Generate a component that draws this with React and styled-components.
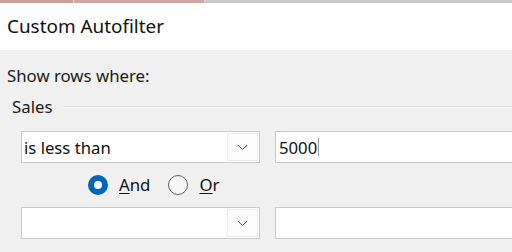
import styled, { createGlobalStyle } from "styled-components";

const Global = createGlobalStyle`
  html, body {
    margin: 0;
    padding: 0;
    width: 512px;
    height: 252px;
    overflow: hidden;
    background: #f0f0f0;
  }
  body {
    font-family: "Noto Sans", "Open Sans", sans-serif;
    color: #1a1a1a;
  }
`;

export default function App() {
  return (
    <>
      <Global />
      <Window>
        <TopStrip>
          <Strip color="#cf9c9c" width="73px" />
          <Strip color="#d4a3a3" width="130px" />
          <Strip color="#c9c9c9" grow />
        </TopStrip>
        <TitleBar>Custom Autofilter</TitleBar>
        <Content>
          <Caption>Show rows where:</Caption>
          <GroupHeader>
            <span>Sales</span>
            <Rule />
          </GroupHeader>
          <FieldRow $top="14px">
            <Select>
              <SelectText>is less than</SelectText>
              <ArrowButton>
                <Chevron />
              </ArrowButton>
            </Select>
            <TextBox>
              5000<Caret />
            </TextBox>
          </FieldRow>
          <RadioRow>
            <RadioOption>
              <Radio checked />
              <RadioLabel>
                <u>A</u>nd
              </RadioLabel>
            </RadioOption>
            <RadioOption>
              <Radio />
              <RadioLabel>
                <u>O</u>r
              </RadioLabel>
            </RadioOption>
          </RadioRow>
          <FieldRow>
            <Select>
              <SelectText />
              <ArrowButton>
                <Chevron />
              </ArrowButton>
            </Select>
            <TextBox />
          </FieldRow>
        </Content>
      </Window>
    </>
  );
}

function Chevron() {
  return (
    <svg width="11" height="7" viewBox="0 0 11 7">
      <path d="M1 1.2 L5.5 5.5 L10 1.2" fill="none" stroke="#555" strokeWidth="1" />
    </svg>
  );
}

const Window = styled.div`
  width: 512px;
  height: 252px;
  display: flex;
  flex-direction: column;
  overflow: hidden;
`;

const TopStrip = styled.div`
  display: flex;
  height: 3px;
  gap: 1px;
  background: #e6d0d0;
`;

const Strip = styled.div`
  height: 3px;
  background: ${(p) => p.color};
  width: ${(p) => (p.grow ? "auto" : p.width)};
  flex: ${(p) => (p.grow ? 1 : "none")};
`;

const TitleBar = styled.div`
  height: 47px;
  background: #ffffff;
  display: flex;
  align-items: center;
  padding-left: 7px;
  font-size: 18.9px;
  color: #111;
  box-sizing: border-box;
  padding-bottom: 1px;
`;

const Content = styled.div`
  flex: 1;
  background: #f0f0f0;
  display: flex;
  flex-direction: column;
  padding-top: 16px;
`;

const Caption = styled.div`
  padding-left: 7px;
  font-size: 16.8px;
  line-height: 20px;
`;

const GroupHeader = styled.div`
  display: flex;
  align-items: center;
  gap: 11px;
  padding-left: 12px;
  margin-top: 11px;
  font-size: 16.8px;
  line-height: 20px;
`;

const Rule = styled.div`
  flex: 1;
  height: 1px;
  background: #dcdcdc;
  border-bottom: 1px solid #f9f9f9;
`;

const FieldRow = styled.div`
  display: flex;
  gap: 15px;
  padding-left: 21px;
  margin-top: ${(p) => p.$top || "0"};
`;

const Select = styled.div`
  width: 239px;
  height: 32px;
  box-sizing: border-box;
  border: 1px solid #cbcbcb;
  background: #ffffff;
  display: flex;
  align-items: stretch;
  flex: none;
`;

const SelectText = styled.div`
  flex: 1;
  display: flex;
  align-items: center;
  padding-left: 2px;
  font-size: 16.7px;
  color: #111;
`;

const ArrowButton = styled.div`
  width: 29px;
  margin: 1px 1px 1px 0;
  background: #fcfcfc;
  border: 1px solid #ececec;
  display: flex;
  align-items: center;
  justify-content: center;
`;

const TextBox = styled.div`
  width: 260px;
  height: 32px;
  flex: none;
  box-sizing: border-box;
  border: 1px solid #cbcbcb;
  background: #ffffff;
  display: flex;
  align-items: center;
  padding-left: 3px;
  font-size: 16.7px;
  color: #111;
`;

const Caret = styled.span`
  display: inline-block;
  width: 1px;
  height: 18px;
  margin-left: 1px;
  background: #9a9a9a;
`;

const RadioRow = styled.div`
  display: flex;
  align-items: center;
  gap: 18px;
  padding-left: 88px;
  height: 44px;
`;

const RadioOption = styled.label`
  display: flex;
  align-items: center;
  gap: 11px;
`;

const Radio = styled.span`
  width: 20px;
  height: 20px;
  box-sizing: border-box;
  border-radius: 50%;
  display: inline-block;
  background: ${(p) => (p.checked ? "#ffffff" : "#f7f7f7")};
  border: ${(p) => (p.checked ? "6px solid #0064bd" : "1px solid #616161")};
`;

const RadioLabel = styled.span`
  font-size: 16.8px;
  line-height: 20px;
  color: #111;
  u {
    text-decoration-thickness: 1px;
    text-underline-offset: 2px;
  }
`;
